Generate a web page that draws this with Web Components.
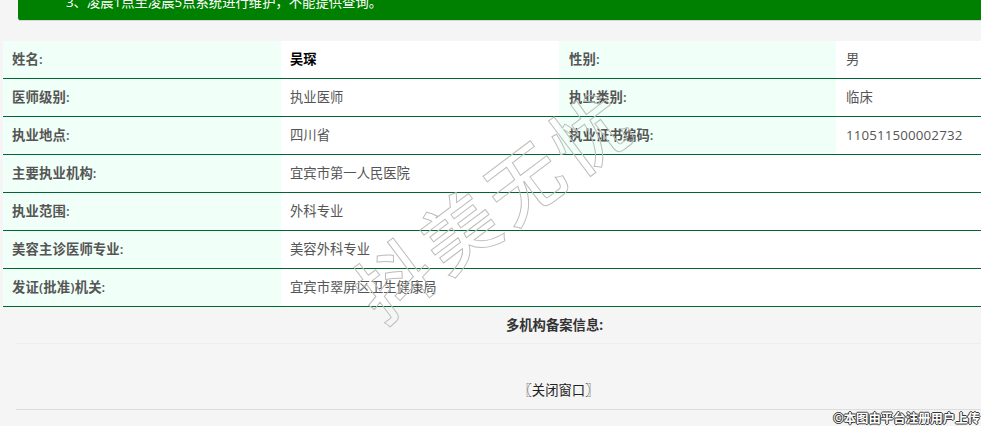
<!DOCTYPE html>
<html lang="zh">
<head>
<meta charset="utf-8">
<title>医师信息</title>
<style>
  html, body { margin: 0; height: 100%; overflow: hidden; background: #f5f5f5; }
  body { font: 13.33px "Open Sans", "Noto Sans CJK SC", sans-serif; color: #555; }
</style>
</head>
<body>
<notice-bar>3、凌晨1点至凌晨5点系统进行维护，不能提供查询。</notice-bar>
<info-table>
  <info-row label="姓名:" value="吴琛" strong label2="性别:" value2="男"></info-row>
  <info-row label="医师级别:" value="执业医师" label2="执业类别:" value2="临床"></info-row>
  <info-row label="执业地点:" value="四川省" label2="执业证书编码:" value2="110511500002732"></info-row>
  <info-row label="主要执业机构:" value="宜宾市第一人民医院"></info-row>
  <info-row label="执业范围:" value="外科专业"></info-row>
  <info-row label="美容主诊医师专业:" value="美容外科专业"></info-row>
  <info-row label="发证(批准)机关:" value="宜宾市翠屏区卫生健康局"></info-row>
</info-table>
<record-footer></record-footer>
<water-mark></water-mark>

<script>
class NoticeBar extends HTMLElement {
  constructor() {
    super()
    this.attachShadow({ mode: 'open' })
    this.shadowRoot.innerHTML = `
      <style>
        :host {
          display: flex;
          align-items: flex-end;
          box-sizing: border-box;
          height: 21px;
          margin-left: 18px;
          padding: 0 0 9px 48px;
          overflow: hidden;
          background: #008000;
          color: #fff;
          line-height: 18px;
          border-bottom: 1px solid #d8d8d8;
          border-radius: 0 0 0 3px;
        }
        span { white-space: nowrap; flex: none; }
      </style>
      <span><slot></slot></span>
    `
  }
}

class InfoTable extends HTMLElement {
  constructor() {
    super()
    this.attachShadow({ mode: 'open' })
    this.shadowRoot.innerHTML = `
      <style>
        :host {
          display: block;
          width: 1112px;
          margin: 20px 0 0 3px;
        }
      </style>
      <slot></slot>
    `
  }
}

class InfoRow extends HTMLElement {
  connectedCallback() {
    const a = name => this.getAttribute(name) || ''
    const pair = this.hasAttribute('label2')
    this.attachShadow({ mode: 'open' })
    this.shadowRoot.innerHTML = `
      <style>
        :host {
          display: grid;
          grid-template-columns: 278px 278px 277px 279px;
          height: 38px;
          box-sizing: border-box;
          background: #fff;
          border-bottom: 1px solid #006633;
        }
        div {
          padding-left: 9px;
          line-height: 36px;
          white-space: nowrap;
        }
        .label { background: #f0fff7; font-weight: 600; letter-spacing: .15px; }
        .value { color: #555; }
        .code { letter-spacing: .14px; }
        .strong { color: #000; font-weight: 700; }
        .wide { grid-column: 2 / 5; }
        .second { padding-left: 10px; }
      </style>
      <div class="label">${a('label')}</div>
      <div class="value ${pair ? '' : 'wide'} ${this.hasAttribute('strong') ? 'strong' : ''}">${a('value')}</div>
      ${pair ? `<div class="label second">${a('label2')}</div><div class="value second code">${a('value2')}</div>` : ''}
    `
  }
}

class RecordFooter extends HTMLElement {
  constructor() {
    super()
    this.attachShadow({ mode: 'open' })
    this.shadowRoot.innerHTML = `
      <style>
        :host {
          display: block;
          width: 1077px;
          margin-left: 16px;
          text-align: center;
          color: #333;
        }
        .title {
          height: 36px;
          line-height: 36px;
          font-weight: 700;
          border-bottom: 1px solid #eee;
        }
        .close {
          height: 66px;
          box-sizing: border-box;
          padding: 37px 0 0 8px;
          line-height: 18px;
          color: #222;
          border-bottom: 1px solid #ddd;
        }
      </style>
      <div class="title">多机构备案信息:</div>
      <div class="close">〖关闭窗口〗</div>
    `
  }
}

class WaterMark extends HTMLElement {
  constructor() {
    super()
    this.attachShadow({ mode: 'open' })
    this.shadowRoot.innerHTML = `
      <style>
        .stamp {
          position: absolute;
          left: 492px;
          top: 202px;
          transform: translate(-50%, -50%) rotate(-37deg);
          font: 500 75px/1 "Noto Sans CJK SC", sans-serif;
          letter-spacing: 6.5px;
          white-space: nowrap;
          color: transparent;
          -webkit-text-stroke: 1px #bdbdbd;
        }
        .credit {
          position: absolute;
          right: 1px;
          bottom: 0;
          font: 700 12.4px/16px "Noto Sans CJK SC", sans-serif;
          color: #fff;
          white-space: nowrap;
          text-shadow: 1px 0 #333, -1px 0 #333, 0 1px #333, 0 -1px #333;
        }
      </style>
      <div class="stamp">抖美无忧</div>
      <div class="credit">©本图由平台注册用户上传</div>
    `
  }
}

customElements.define('notice-bar', NoticeBar)
customElements.define('info-table', InfoTable)
customElements.define('info-row', InfoRow)
customElements.define('record-footer', RecordFooter)
customElements.define('water-mark', WaterMark)
</script>
</body>
</html>
